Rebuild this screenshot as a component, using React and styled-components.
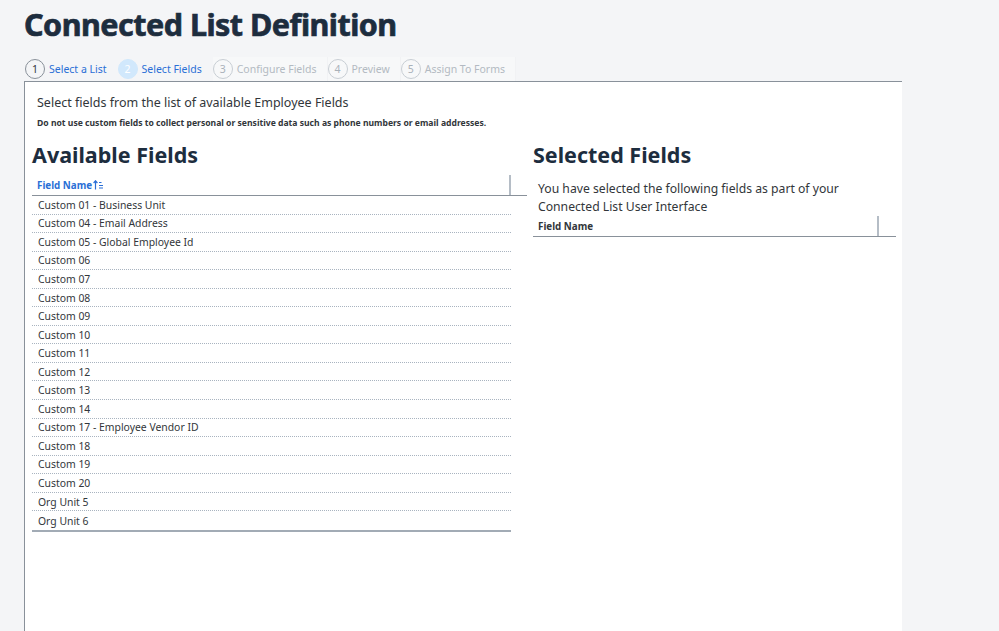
import React from "react";
import styled, { createGlobalStyle } from "styled-components";

const GlobalStyle = createGlobalStyle`
  html, body {
    margin: 0;
    padding: 0;
    background: #f4f5f7;
    font-family: "Noto Sans", "Open Sans", sans-serif;
    color: #32363a;
  }
`;

const Page = styled.div`
  min-height: 631px;
  display: flex;
  flex-direction: column;
  padding-left: 24px;
  box-sizing: border-box;
`;

const Title = styled.h1`
  margin: 0;
  padding-top: 4px;
  height: 53px;
  font-family: "Noto Sans", sans-serif;
  font-weight: 700;
  font-size: 30.5px;
  line-height: 40px;
  letter-spacing: -0.5px;
  color: #1d2d3e;
  -webkit-text-stroke: 0.7px #1d2d3e;
`;

const Steps = styled.div`
  display: flex;
  height: 24px;
  align-items: stretch;
`;

const Step = styled.div`
  display: flex;
  align-items: center;
  gap: 4px;
  padding: 0 10px 0 ${(p) => (p.$first ? 1 : 0)}px;
  background: ${(p) => (p.$state === "todo" ? "#f7f8f9" : "transparent")};
  border-right: 1px solid
    ${(p) => (p.$state === "todo" ? "#f1f2f4" : "transparent")};
`;

const Bubble = styled.span`
  width: 20px;
  height: 20px;
  border-radius: 50%;
  box-sizing: border-box;
  display: flex;
  align-items: center;
  justify-content: center;
  font-size: 10.5px;
  border: 1px solid
    ${(p) =>
      p.$state === "done" ? "#89919a" : p.$state === "active" ? "#d1e8fc" : "#c8ced4"};
  background: ${(p) => (p.$state === "active" ? "#d1e8fc" : "transparent")};
  color: ${(p) =>
    p.$state === "done" ? "#32363a" : p.$state === "active" ? "#fff" : "#a9b1b9"};
`;

const StepLabel = styled.span`
  font-size: 10.5px;
  color: ${(p) => (p.$state === "todo" ? "#b3bac2" : "#2a6fd6")};
`;

const Panel = styled.div`
  flex: 1;
  width: 878px;
  box-sizing: border-box;
  background: #fff;
  border-top: 1px solid #89919a;
  border-left: 1px solid #89919a;
  padding: 12px 6px 0 7px;
`;

const Intro = styled.p`
  margin: 0 0 0 5px;
  font-size: 12.5px;
  line-height: 17px;
`;

const Warning = styled.p`
  margin: 6px 0 0 5px;
  font-size: 8.6px;
  font-weight: 700;
  line-height: 12px;
  color: #32363a;
`;

const Columns = styled.div`
  display: flex;
  gap: 6px;
  margin-top: 13px;
`;

const Column = styled.section`
  width: ${(p) => p.$width}px;
  display: flex;
  flex-direction: column;
`;

const Heading = styled.h2`
  margin: 0;
  font-family: "Noto Sans", sans-serif;
  font-weight: 700;
  font-size: 21.5px;
  line-height: 26px;
  color: #1d2d3e;
`;

const Note = styled.p`
  margin: 12px 0 0 5px;
  font-size: 12.2px;
  line-height: 18px;
`;

const HeaderRow = styled.div`
  display: flex;
  height: 20px;
  margin-top: ${(p) => p.$top}px;
  border-bottom: 1px solid #89919a;
  box-sizing: content-box;
`;

const HeaderCell = styled.div`
  width: ${(p) => p.$width}px;
  display: flex;
  align-items: center;
  gap: 1px;
  padding-left: 5px;
  box-sizing: border-box;
  border-right: 2px solid #b5bdc6;
  font-size: 9.8px;
  font-weight: 700;
  color: ${(p) => (p.$sortable ? "#2a6fd6" : "#32363a")};
`;

const Rows = styled.div`
  width: 479px;
  border-bottom: 2px solid #a2abb5;
`;

const Row = styled.div`
  height: 18.55px;
  box-sizing: border-box;
  display: flex;
  align-items: center;
  padding-left: 6px;
  font-size: 10.4px;
  border-bottom: 1px dotted #a9b4c0;
  &:last-child {
    border-bottom: none;
  }
`;

const SortIcon = () => (
  <svg width="11" height="10" viewBox="0 0 11 10" fill="none" stroke="#2a6fd6" strokeWidth="1.2">
    <path d="M2.5 9.5V1M0.6 3L2.5 0.8L4.4 3" />
    <path d="M6 2.5h2.5M6 5.5h4M6 8h4" />
  </svg>
);

const steps = [
  { n: 1, label: "Select a List", state: "done" },
  { n: 2, label: "Select Fields", state: "active" },
  { n: 3, label: "Configure Fields", state: "todo" },
  { n: 4, label: "Preview", state: "todo" },
  { n: 5, label: "Assign To Forms", state: "todo" },
];

const fields = [
  "Custom 01 - Business Unit",
  "Custom 04 - Email Address",
  "Custom 05 - Global Employee Id",
  "Custom 06",
  "Custom 07",
  "Custom 08",
  "Custom 09",
  "Custom 10",
  "Custom 11",
  "Custom 12",
  "Custom 13",
  "Custom 14",
  "Custom 17 - Employee Vendor ID",
  "Custom 18",
  "Custom 19",
  "Custom 20",
  "Org Unit 5",
  "Org Unit 6",
];

export default function App() {
  return (
    <>
      <GlobalStyle />
      <Page>
        <Title>Connected List Definition</Title>
        <Steps>
          {steps.map((s, i) => (
            <Step key={s.n} $state={s.state} $first={i === 0}>
              <Bubble $state={s.state}>{s.n}</Bubble>
              <StepLabel $state={s.state}>{s.label}</StepLabel>
            </Step>
          ))}
        </Steps>
        <Panel>
          <Intro>Select fields from the list of available Employee Fields</Intro>
          <Warning>
            Do not use custom fields to collect personal or sensitive data such as phone
            numbers or email addresses.
          </Warning>
          <Columns>
            <Column $width={495}>
              <Heading>Available Fields</Heading>
              <HeaderRow $top={7}>
                <HeaderCell $width={479} $sortable>
                  Field Name
                  <SortIcon />
                </HeaderCell>
              </HeaderRow>
              <Rows>
                {fields.map((f) => (
                  <Row key={f}>{f}</Row>
                ))}
              </Rows>
            </Column>
            <Column $width={363}>
              <Heading>Selected Fields</Heading>
              <Note>
                You have selected the following fields as part of your
                <br />
                Connected List User Interface
              </Note>
              <HeaderRow $top={0}>
                <HeaderCell $width={346}>Field Name</HeaderCell>
              </HeaderRow>
            </Column>
          </Columns>
        </Panel>
      </Page>
    </>
  );
}
